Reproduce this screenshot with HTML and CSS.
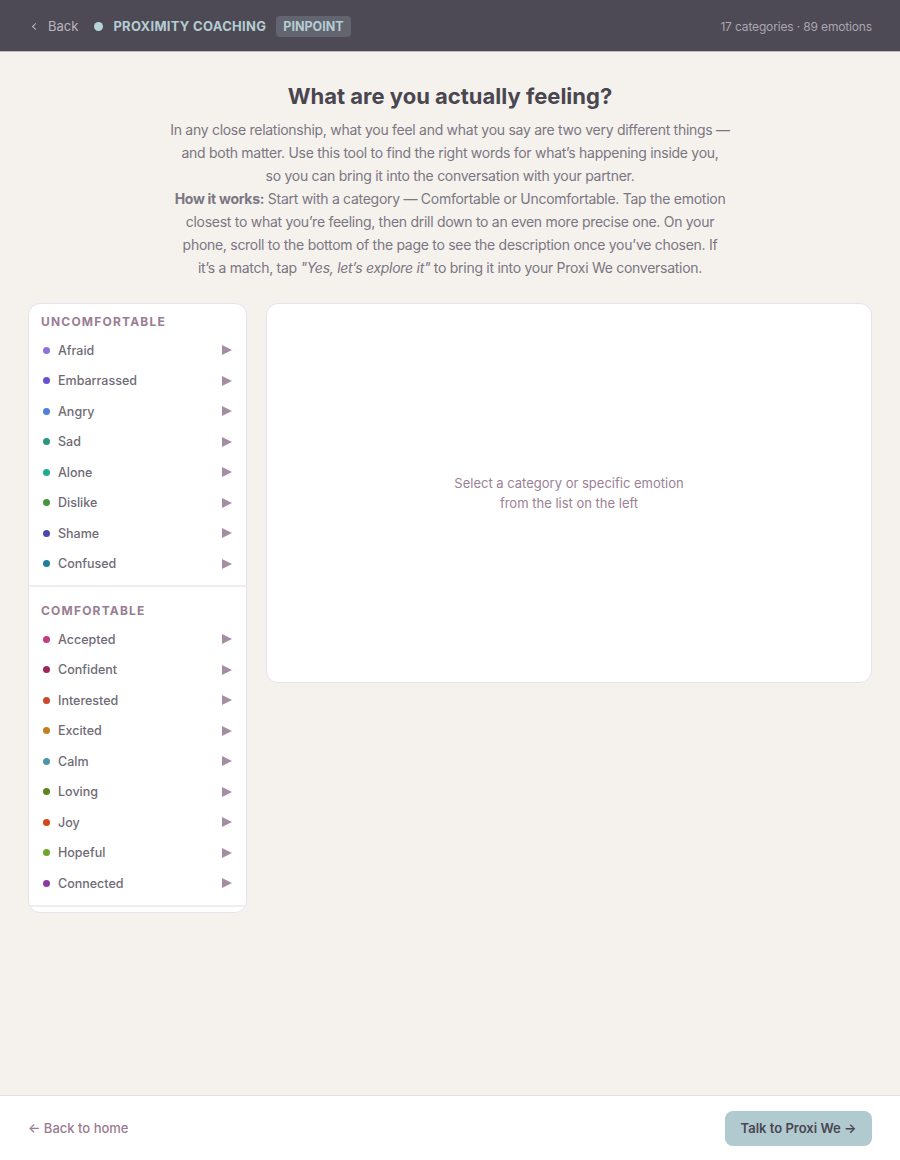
FILE: index.html
```html
<!DOCTYPE html>
<html lang="en">
<head>
  <meta charset="UTF-8">
  <meta name="viewport" content="width=device-width, initial-scale=1.0">
  <title>Pinpoint – Proximity Coaching</title>
  <link rel="stylesheet" href="styles.css">
</head>
<body>
  <header class="topbar">
    <div class="topbar-left">
      <a class="back-link" href="#"><span class="chev"></span>Back</a>
      <span class="brand-dot"></span>
      <span class="brand">PROXIMITY COACHING</span>
      <span class="pill">PINPOINT</span>
    </div>
    <div class="stats">17 categories · 89 emotions</div>
  </header>

  <main class="main">
    <h1>What are you actually feeling?</h1>
    <p class="intro">In any close relationship, what you feel and what you say are two very different things —<br>and both matter. Use this tool to find the right words for what’s happening inside you,<br>so you can bring it into the conversation with your partner.</p>
    <p class="intro"><strong>How it works:</strong> Start with a category — Comfortable or Uncomfortable. Tap the emotion<br>closest to what you’re feeling, then drill down to an even more precise one. On your<br>phone, scroll to the bottom of the page to see the description once you’ve chosen. If<br>it’s a match, tap <em>"Yes, let’s explore it"</em> to bring it into your Proxi We conversation.</p>

    <div class="picker">
      <aside class="list-card">
        <section class="group">
          <h3>UNCOMFORTABLE</h3>
          <ul>
            <li><span class="dot c-afraid"></span>Afraid<span class="arrow"></span></li>
            <li><span class="dot c-embarrassed"></span>Embarrassed<span class="arrow"></span></li>
            <li><span class="dot c-angry"></span>Angry<span class="arrow"></span></li>
            <li><span class="dot c-sad"></span>Sad<span class="arrow"></span></li>
            <li><span class="dot c-alone"></span>Alone<span class="arrow"></span></li>
            <li><span class="dot c-dislike"></span>Dislike<span class="arrow"></span></li>
            <li><span class="dot c-shame"></span>Shame<span class="arrow"></span></li>
            <li><span class="dot c-confused"></span>Confused<span class="arrow"></span></li>
          </ul>
        </section>
        <section class="group">
          <h3>COMFORTABLE</h3>
          <ul>
            <li><span class="dot c-accepted"></span>Accepted<span class="arrow"></span></li>
            <li><span class="dot c-confident"></span>Confident<span class="arrow"></span></li>
            <li><span class="dot c-interested"></span>Interested<span class="arrow"></span></li>
            <li><span class="dot c-excited"></span>Excited<span class="arrow"></span></li>
            <li><span class="dot c-calm"></span>Calm<span class="arrow"></span></li>
            <li><span class="dot c-loving"></span>Loving<span class="arrow"></span></li>
            <li><span class="dot c-joy"></span>Joy<span class="arrow"></span></li>
            <li><span class="dot c-hopeful"></span>Hopeful<span class="arrow"></span></li>
            <li><span class="dot c-connected"></span>Connected<span class="arrow"></span></li>
          </ul>
        </section>
      </aside>

      <div class="detail-card">
        <p class="empty">Select a category or specific emotion<br>from the list on the left</p>
      </div>
    </div>
  </main>

  <footer class="footer">
    <a class="home-link" href="#">← Back to home</a>
    <button class="cta">Talk to Proxi We →</button>
  </footer>
</body>
</html>
```

FILE: styles.css
```css
* {
  box-sizing: border-box;
}
body {
  font-family: 'Inter', 'Noto Sans', sans-serif;
  margin: 0;
  padding: 0;
  min-height: 100vh;
  display: flex;
  flex-direction: column;
  background: #f5f2ee;
  color: #4a4650;
}
a {
  text-decoration: none;
}

/* top bar */
.topbar {
  height: 52px;
  background: #4d4a56;
  border-bottom: 1px solid #bdbac2;
  display: flex;
  align-items: center;
  justify-content: space-between;
  padding: 1px 28px 0 33px;
}
.topbar-left {
  display: flex;
  align-items: center;
}
.back-link {
  display: flex;
  align-items: center;
  color: #b9b6be;
  font-size: 13px;
}
.chev {
  width: 5px;
  height: 5px;
  border-left: 1.4px solid #b9b6be;
  border-bottom: 1.4px solid #b9b6be;
  transform: rotate(45deg);
  margin-right: 10px;
}
.brand-dot {
  width: 9px;
  height: 9px;
  border-radius: 50%;
  background: #b7d3d8;
  margin: 0 10px 0 16px;
}
.brand {
  font-size: 13px;
  font-weight: 700;
  letter-spacing: 0.3px;
  color: #b5cdd2;
}
.pill {
  margin-left: 10px;
  background: #62646f;
  color: #b5cdd2;
  font-size: 12.5px;
  font-weight: 700;
  padding: 3px 7px;
  border-radius: 4px;
}
.stats {
  font-size: 12px;
  letter-spacing: -0.15px;
  color: #a9a6af;
}

/* main */
.main {
  flex: 1;
  padding: 30px 28px 40px;
}
h1 {
  text-align: center;
  font-size: 22px;
  line-height: 28px;
  margin: 0 0 8px;
  color: #4a4650;
}
.intro {
  max-width: 620px;
  margin: 0 auto;
  text-align: center;
  font-size: 14px;
  line-height: 23px;
  letter-spacing: -0.28px;
  color: #7b7681;
}
.intro strong {
  font-weight: 700;
  color: #7b7681;
}
.picker {
  display: grid;
  grid-template-columns: 219px 1fr;
  gap: 19px;
  align-items: start;
  margin-top: 24px;
}
.list-card, .detail-card {
  background: #fff;
  border: 1px solid #e6e2ec;
  border-radius: 12px;
}
.list-card {
  padding-bottom: 5px;
}
.group {
  padding: 10px 0 6px;
  border-bottom: 2px solid #efedf2;
}
.group + .group {
  padding-top: 16px;
}
.group h3 {
  margin: 0;
  padding-left: 12px;
  font-size: 12px;
  line-height: 16px;
  letter-spacing: 1.2px;
  font-weight: 700;
  color: #9a7d93;
}
.group ul {
  list-style: none;
  margin: 5px 0 0;
  padding: 0;
}
.group li {
  display: flex;
  align-items: center;
  height: 30.5px;
  padding: 0 14px;
  font-size: 12.5px;
  font-weight: 500;
  color: #6f6b76;
  cursor: pointer;
}
.dot {
  width: 7px;
  height: 7px;
  border-radius: 50%;
  margin-right: 8px;
}
.arrow {
  margin-left: auto;
  width: 0;
  height: 0;
  border-top: 5.5px solid transparent;
  border-bottom: 5.5px solid transparent;
  border-left: 10px solid #a38ea3;
}
.c-afraid { background: #8c72d9; }
.c-embarrassed { background: #6a50d0; }
.c-angry { background: #4d80da; }
.c-sad { background: #2b9580; }
.c-alone { background: #1fab92; }
.c-dislike { background: #47963e; }
.c-shame { background: #4a48a8; }
.c-confused { background: #1f7f9a; }
.c-accepted { background: #c73a7c; }
.c-confident { background: #9e2758; }
.c-interested { background: #c9482f; }
.c-excited { background: #c2801e; }
.c-calm { background: #4a97a3; }
.c-loving { background: #5b8320; }
.c-joy { background: #d2461c; }
.c-hopeful { background: #6ea32e; }
.c-connected { background: #8d3aa3; }

.detail-card {
  height: 380px;
  display: flex;
  align-items: center;
  justify-content: center;
}
.empty {
  margin: 0;
  text-align: center;
  font-size: 13px;
  line-height: 20px;
  color: #9a8196;
}

/* footer */
.footer {
  height: 65px;
  background: #fff;
  border-top: 1px solid #e2dfe5;
  display: flex;
  align-items: center;
  justify-content: space-between;
  padding: 0 28px;
}
.home-link {
  font-size: 13px;
  font-weight: 500;
  color: #9a7b92;
}
.cta {
  height: 35px;
  width: 147px;
  border: none;
  border-radius: 8px;
  background: #b0cad0;
  color: #4a4650;
  font-family: inherit;
  font-size: 13px;
  font-weight: 600;
  cursor: pointer;
}
```
